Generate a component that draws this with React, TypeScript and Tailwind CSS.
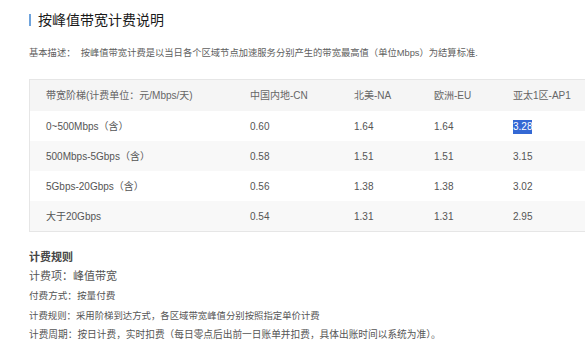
const rows = [
  ["0~500Mbps（含）", "0.60", "1.64", "1.64", "3.28"],
  ["500Mbps-5Gbps（含）", "0.58", "1.51", "1.51", "3.15"],
  ["5Gbps-20Gbps（含）", "0.56", "1.38", "1.38", "3.02"],
  ["大于20Gbps", "0.54", "1.31", "1.31", "2.95"],
];

export default function App() {
  return (
    <div className="w-[585px] h-[352px] overflow-hidden bg-white font-['Liberation_Sans','Noto_Sans_CJK_SC',sans-serif]">
      <div className="pl-[29px] pt-[12px]">
        {/* title */}
        <div className="flex items-center h-[16px]">
          <div className="w-[2px] h-[12px] bg-[#6ea3dc]" />
          <h1 className="ml-[7px] text-[14px] leading-[16px] text-[#1a1a1a]">按峰值带宽计费说明</h1>
        </div>

        <p className="mt-[18px] text-[9.3px] leading-[14px] text-[#5e5e5e] whitespace-nowrap">
          基本描述：&nbsp;&nbsp;按峰值带宽计费是以当日各个区域节点加速服务分别产生的带宽最高值（单位Mbps）为结算标准.
        </p>

        {/* table */}
        <div className="mt-[19px] w-[600px] border border-[#e6e6e6] border-r-0">
          <div className="flex h-[31px] items-center bg-[#f5f5f5] text-[10px] text-[#666]">
            <div className="w-[204px] pl-[16px] whitespace-nowrap">带宽阶梯(计费单位：元/Mbps/天)</div>
            <div className="w-[104px] pl-[16px]">中国内地-CN</div>
            <div className="w-[80px] pl-[16px]">北美-NA</div>
            <div className="w-[79px] pl-[16px]">欧洲-EU</div>
            <div className="flex-1 pl-[16px]">亚太1区-AP1</div>
          </div>
          {rows.map((r, i) => (
            <div
              key={i}
              className={`flex h-[30px] items-center text-[10px] text-[#555] ${i % 2 === 1 ? "bg-[#f8f8f8]" : "bg-white"}`}
            >
              <div className="w-[204px] pl-[16px] whitespace-nowrap">{r[0]}</div>
              <div className="w-[104px] pl-[16px]">{r[1]}</div>
              <div className="w-[80px] pl-[16px]">{r[2]}</div>
              <div className="w-[79px] pl-[16px]">{r[3]}</div>
              <div className="flex-1 pl-[16px]">
                {i === 0 ? (
                  <span className="inline-block bg-[#3468d4] text-white leading-[14px]">{r[4]}</span>
                ) : (
                  r[4]
                )}
              </div>
            </div>
          ))}
        </div>

        {/* rules */}
        <div className="mt-[17px] text-[#555] whitespace-nowrap">
          <div className="text-[11px] leading-[16px] font-bold text-[#444]">计费规则</div>
          <div className="mt-[3px] text-[11px] leading-[16px]">计费项：峰值带宽</div>
          <div className="mt-[4px] text-[9.6px] leading-[16px]">付费方式：按量付费</div>
          <div className="mt-[4px] text-[9.4px] leading-[16px]">计费规则：采用阶梯到达方式，各区域带宽峰值分别按照指定单价计费</div>
          <div className="mt-[3px] text-[9.7px] leading-[16px]">计费周期：按日计费，实时扣费（每日零点后出前一日账单并扣费，具体出账时间以系统为准）。</div>
        </div>
      </div>
    </div>
  );
}
